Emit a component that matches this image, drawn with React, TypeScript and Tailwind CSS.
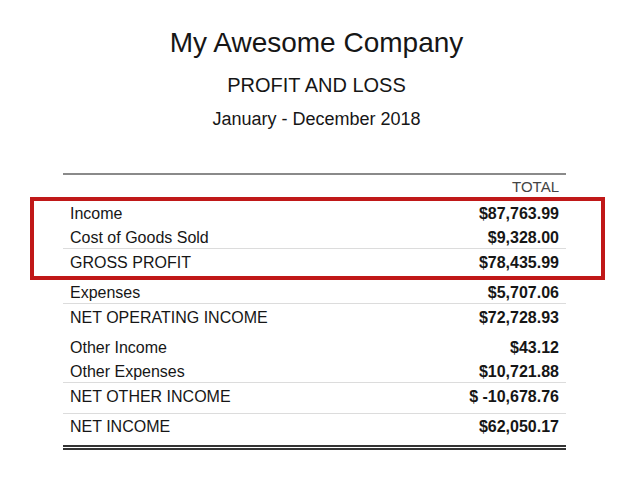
import React from 'react';

type Row = { label: string; amount: string; line?: boolean };

const sections: Row[][] = [
  [
    { label: 'Income', amount: '$87,763.99' },
    { label: 'Cost of Goods Sold', amount: '$9,328.00' },
    { label: 'GROSS PROFIT', amount: '$78,435.99', line: true },
  ],
  [
    { label: 'Expenses', amount: '$5,707.06' },
    { label: 'NET OPERATING INCOME', amount: '$72,728.93', line: true },
  ],
  [
    { label: 'Other Income', amount: '$43.12' },
    { label: 'Other Expenses', amount: '$10,721.88' },
    { label: 'NET OTHER INCOME', amount: '$ -10,678.76', line: true },
  ],
];

const ReportRow = ({ label, amount, line }: Row) => (
  <div
    className={`flex items-start justify-between px-[7px] pt-[4px] leading-[20px] ${
      line ? 'border-t border-[#dcdcdc] h-[25px]' : 'h-[24px]'
    }`}
  >
    <span className="text-[16px]">{label}</span>
    <span className="text-[16px] font-bold">{amount}</span>
  </div>
);

export default function App() {
  return (
    <div className="w-[632px] h-[479px] bg-white text-[#161616] font-['Liberation_Sans',Arial,sans-serif] overflow-hidden">
      {/* report heading */}
      <div className="flex flex-col items-center pt-[27px] pl-[1px]">
        <h1 className="text-[28px] leading-[32px]">My Awesome Company</h1>
        <h2 className="text-[20px] leading-[24px] mt-[14px]">PROFIT AND LOSS</h2>
        <p className="text-[18px] leading-[22px] mt-[11px]">January - December 2018</p>
      </div>

      <div className="relative ml-[63px] w-[503px] mt-[43px] border-t-2 border-[#8a8a8a]">
        <div className="flex justify-end h-[25px] pt-[2px] pr-[7px] text-[15px] leading-[20px] text-[#444] border-b border-[#555]">
          TOTAL
        </div>

        {sections.map((rows, i) => (
          <div key={i} className="mb-[6px]">
            {rows.map((r) => (
              <ReportRow key={r.label} {...r} />
            ))}
          </div>
        ))}

        <div className="border-t border-[#dcdcdc]">
          <div className="flex items-start justify-between h-[24px] px-[7px] pt-[3px] leading-[20px]">
            <span className="text-[16px]">NET INCOME</span>
            <span className="text-[16px] font-bold">$62,050.17</span>
          </div>
        </div>
        <div className="mt-[7px] border-b-[5px] border-double border-[#333]" />

        {/* highlight box */}
        <div className="absolute left-[-33px] top-[22px] w-[575px] h-[83px] border-4 border-[#c01818] pointer-events-none" />
      </div>
    </div>
  );
}
